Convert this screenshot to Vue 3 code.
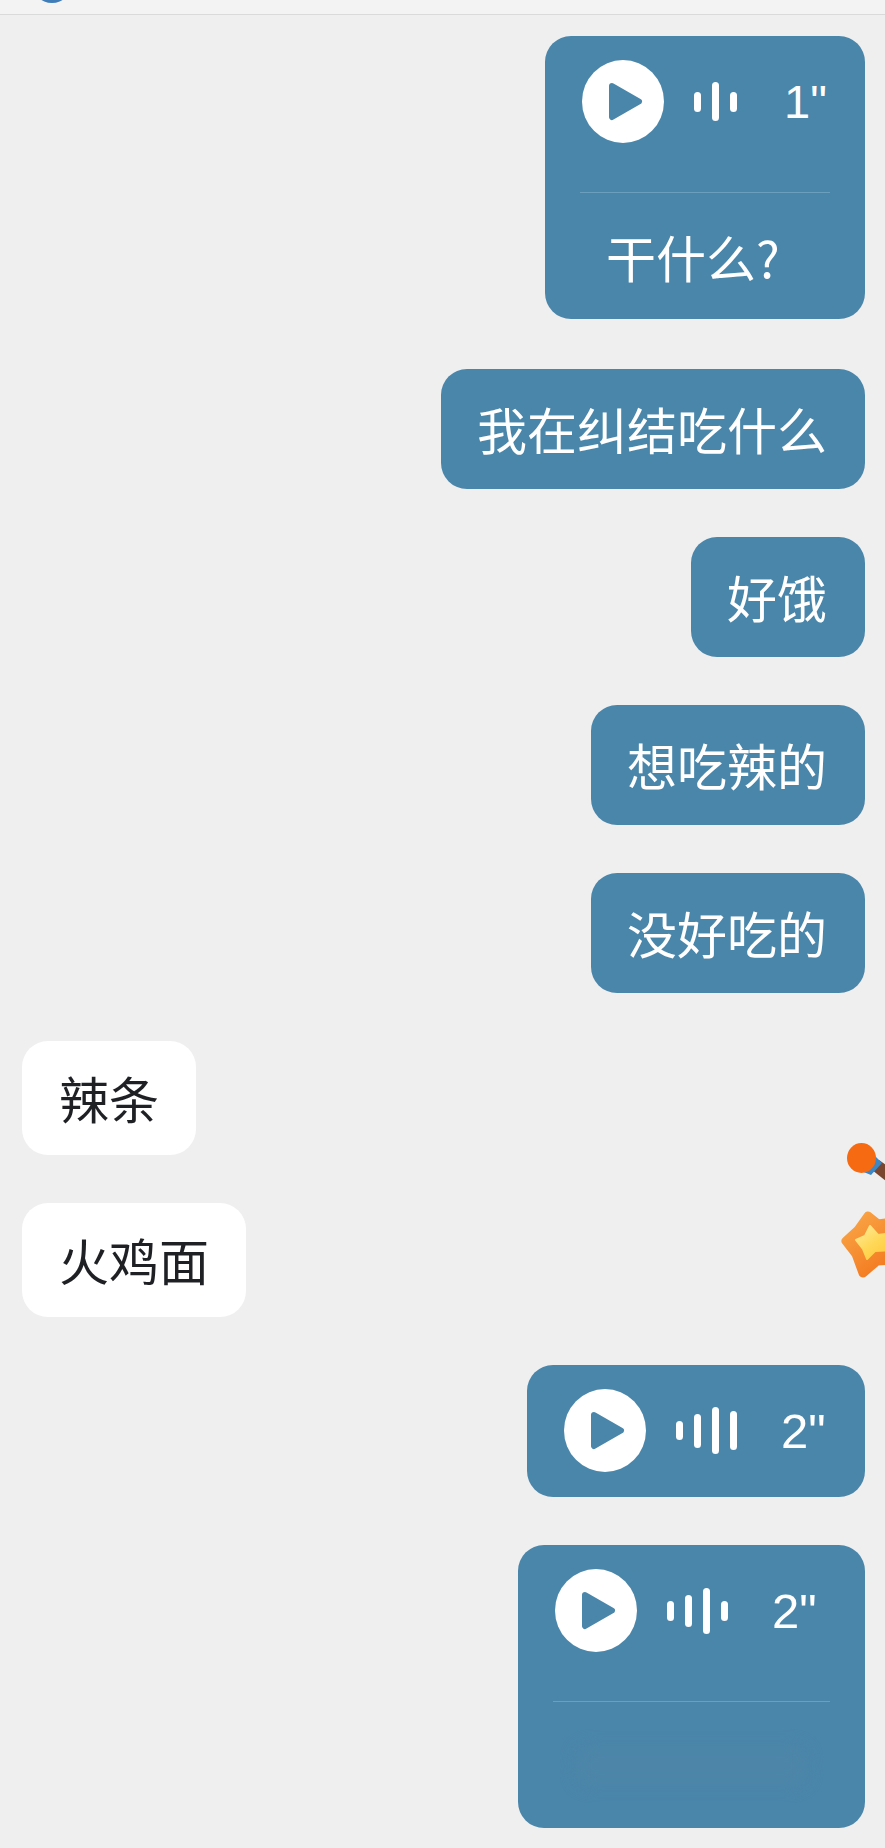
<script setup>
const waves = {
  one: [20, 39, 20],
  two: [19, 34, 47, 39],
  three: [20, 32, 46, 20],
}
const sentBefore = ['我在纠结吃什么', '好饿', '想吃辣的', '没好吃的']
const received = ['辣条', '火鸡面']
</script>

<template>
  <div class="page">
    <header class="top">
      <div class="avatar"></div>
    </header>

    <main class="list">
      <section class="bubble sent voice tall first">
        <div class="voice-row">
          <svg class="play" viewBox="0 0 82 83">
            <ellipse cx="41" cy="41.5" rx="41" ry="41.5" fill="#fff" />
            <path d="M30 26 L57 41.5 L30 57 Z" fill="#4a86aa" stroke="#4a86aa" stroke-width="6" stroke-linejoin="round" />
          </svg>
          <div class="wave">
            <i v-for="(h, n) in waves.one" :key="n" :style="{ height: h + 'px' }"></i>
          </div>
          <span class="secs one">1"</span>
        </div>
        <div class="rule"></div>
        <div class="transcript">干什么?</div>
      </section>

      <div v-for="t in sentBefore" :key="t" class="bubble sent text">{{ t }}</div>
      <div v-for="t in received" :key="t" class="bubble received text">{{ t }}</div>

      <section class="bubble sent voice">
        <div class="voice-row">
          <svg class="play" viewBox="0 0 82 83">
            <ellipse cx="41" cy="41.5" rx="41" ry="41.5" fill="#fff" />
            <path d="M30 26 L57 41.5 L30 57 Z" fill="#4a86aa" stroke="#4a86aa" stroke-width="6" stroke-linejoin="round" />
          </svg>
          <div class="wave">
            <i v-for="(h, n) in waves.two" :key="n" :style="{ height: h + 'px' }"></i>
          </div>
          <span class="secs">2"</span>
        </div>
      </section>

      <section class="bubble sent voice tall wide">
        <div class="voice-row">
          <svg class="play" viewBox="0 0 82 83">
            <ellipse cx="41" cy="41.5" rx="41" ry="41.5" fill="#fff" />
            <path d="M30 26 L57 41.5 L30 57 Z" fill="#4a86aa" stroke="#4a86aa" stroke-width="6" stroke-linejoin="round" />
          </svg>
          <div class="wave">
            <i v-for="(h, n) in waves.three" :key="n" :style="{ height: h + 'px' }"></i>
          </div>
          <span class="secs">2"</span>
        </div>
        <div class="rule"></div>
        <div class="smudge"></div>
      </section>
    </main>

    <svg class="sticker" viewBox="835 1135 50 150">
      <defs>
        <linearGradient id="starOuter" x1="0" y1="0" x2="0.6" y2="1">
          <stop offset="0" stop-color="#f9a748" />
          <stop offset="1" stop-color="#f47c22" />
        </linearGradient>
        <linearGradient id="starInner" x1="0" y1="0" x2="0.8" y2="1">
          <stop offset="0" stop-color="#ffeb9c" />
          <stop offset="0.55" stop-color="#ffd858" />
          <stop offset="1" stop-color="#ffc93e" />
        </linearGradient>
      </defs>
      <path d="M879 1160 L886 1165 L886 1181 L872 1170 Z" fill="#7a4630" />
      <path d="M874 1155 L882 1163 L871 1175 L861 1171 Z" fill="#3f87c2" />
      <ellipse cx="861.5" cy="1158" rx="14.5" ry="15" fill="#f66a12" />
      <path d="M868 1216 L878 1224 L892 1222 L892 1260 L877 1261 L863 1273 L856 1254 L846 1241 L858 1230 Z" fill="url(#starOuter)" stroke="url(#starOuter)" stroke-width="9" stroke-linejoin="round" />
      <path d="M870 1226 L878 1235 L892 1233 L892 1250 L875 1251 L867 1259 L863 1249 L856 1240 L865 1236 Z" fill="url(#starInner)" stroke="url(#starInner)" stroke-width="2" stroke-linejoin="round" />
    </svg>
  </div>
</template>

<style>
html, body { margin: 0; background: #efeff0; }
</style>

<style scoped>
.page {
  position: relative;
  width: 885px;
  height: 1848px;
  overflow: hidden;
  background: #efeff0;
  font-family: "Noto Sans CJK SC", "Liberation Sans", sans-serif;
}
.top {
  position: relative;
  height: 14px;
  background: #f3f3f3;
  border-bottom: 1px solid #dadada;
  overflow: hidden;
}
.avatar {
  position: absolute;
  left: 32px;
  top: -37px;
  width: 40px;
  height: 40px;
  border-radius: 50%;
  background: #3f7db9;
}
.list {
  display: flex;
  flex-direction: column;
  gap: 48px;
  padding: 21px 20px 0 22px;
}
.bubble {
  box-sizing: border-box;
  border-radius: 26px;
}
.sent {
  align-self: flex-end;
  background: #4a86aa;
  color: #fff;
}
.received {
  align-self: flex-start;
  background: #fff;
  color: #1f2024;
  height: 114px;
}
.text {
  display: flex;
  align-items: center;
  padding: 0 38px 0 36px;
  font-size: 50px;
  line-height: 60px;
  font-weight: 400;
}
.received.text {
  padding: 0 37px 3px 37px;
}
.sent.text {
  height: 120px;
  padding-bottom: 2px;
}
.voice {
  padding: 24px 35px 25px;
  width: 338px;
}
.tall {
  height: 283px;
  padding-bottom: 0;
}
.first {
  width: 320px;
  margin-bottom: 2px;
}
.wide {
  width: 347px;
}
.voice-row {
  display: flex;
  align-items: center;
  padding-left: 2px;
  height: 83px;
}
.play {
  width: 82px;
  height: 83px;
  flex: none;
}
.wave {
  display: flex;
  align-items: center;
  gap: 11px;
  margin: 0 44px 0 30px;
}
.wave i {
  display: block;
  width: 7px;
  border-radius: 4px;
  background: #fff;
}
.secs {
  font-family: "Liberation Sans", Arial, sans-serif;
  font-size: 49px;
  line-height: 60px;
}
.secs.one {
  margin-left: 3px;
  font-size: 47px;
}
.rule {
  height: 1px;
  margin-top: 49px;
  background: #6b9fbd;
}
.transcript {
  padding: 33px 0 0 26px;
  font-size: 50px;
  line-height: 60px;
}
.smudge {
  height: 42px;
  margin: 43px 22px 0;
  border-radius: 16px;
  background: #4c85a8;
  filter: blur(7px);
}
.sticker {
  position: absolute;
  left: 835px;
  top: 1135px;
  width: 50px;
  height: 150px;
}
</style>
